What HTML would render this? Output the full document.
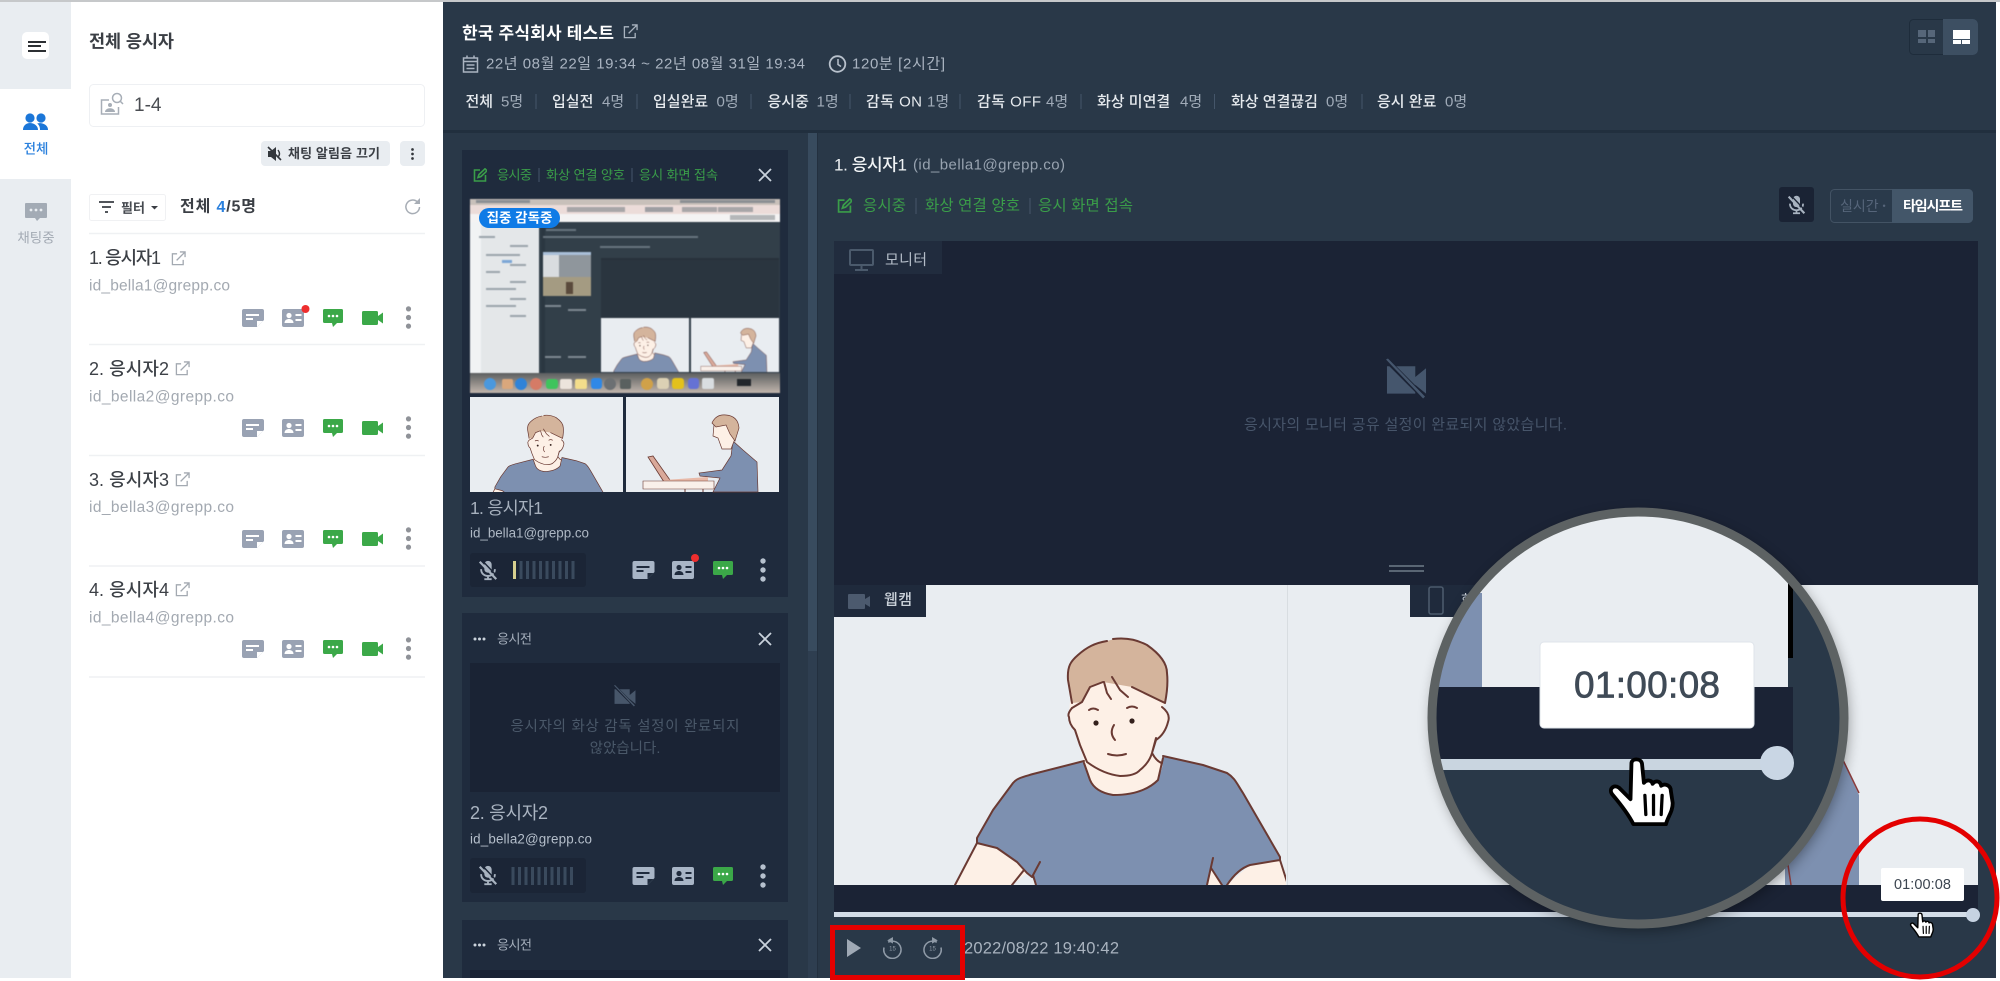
<!DOCTYPE html>
<html lang="ko"><head><meta charset="utf-8"><title>전체 응시자</title>
<style>
html,body{margin:0;padding:0;background:#fff;width:2000px;height:981px;overflow:hidden}
svg{display:block;position:absolute;left:0;top:0}
text{font-family:"Liberation Sans","Noto Sans CJK KR",sans-serif;dominant-baseline:central;white-space:pre}
.b{font-weight:700}.m{font-weight:500}
.g{fill:#3a9d49}
.s{fill:#aab4c1}
</style></head><body>
<svg width="2000" height="981" viewBox="0 0 2000 981" xmlns="http://www.w3.org/2000/svg">
<defs>
<symbol id="memo" viewBox="0 0 22 18"><path fill="currentColor" d="M2 0h18a2 2 0 0 1 2 2v9l-7 7H2a2 2 0 0 1-2-2V2a2 2 0 0 1 2-2z"/><rect x="4" y="5" width="13" height="2" fill="var(--k,#fff)"/><rect x="4" y="9" width="7" height="2" fill="var(--k,#fff)"/><path d="M15 12h6l-6 6z" fill="var(--k,#fff)"/></symbol>
<symbol id="idc" viewBox="0 0 22 18"><rect width="22" height="18" rx="2" fill="currentColor"/><circle cx="7" cy="6.5" r="2.6" fill="var(--k,#fff)"/><path d="M2.500 14c0-3 2.500-4 4.500-4s4.500 1 4.500 4z" fill="var(--k,#fff)"/><rect x="13.500" y="5" width="6" height="2" fill="var(--k,#fff)"/><rect x="13.500" y="10" width="6" height="2" fill="var(--k,#fff)"/></symbol>
<symbol id="chat" viewBox="0 0 20 18"><path fill="#3ba848" d="M1.500 0h17A1.500 1.500 0 0 1 20 1.500v11a1.500 1.500 0 0 1-1.500 1.500H14l-4 4-1-4H1.500A1.500 1.500 0 0 1 0 12.500v-11A1.500 1.500 0 0 1 1.500 0z"/><circle cx="6" cy="7" r="1.300" fill="#fff"/><circle cx="10" cy="7" r="1.300" fill="#fff"/><circle cx="14" cy="7" r="1.300" fill="#fff"/></symbol>
<symbol id="video" viewBox="0 0 21 14"><path fill="#3ba848" d="M1.500 0h13A1.500 1.500 0 0 1 16 1.500V5l5-3.500v11L16 9v3.500a1.500 1.500 0 0 1-1.500 1.500h-13A1.500 1.500 0 0 1 0 12.500v-11A1.500 1.500 0 0 1 1.500 0z"/></symbol>
<symbol id="dots" viewBox="0 0 6 24"><circle cx="3" cy="3" r="2.700" fill="currentColor"/><circle cx="3" cy="12" r="2.700" fill="currentColor"/><circle cx="3" cy="21" r="2.700" fill="currentColor"/></symbol>
<symbol id="micoff" viewBox="0 0 24 24"><g fill="none" stroke="currentColor" stroke-width="2"><rect x="8" y="2" width="8" height="13" rx="4" fill="currentColor" stroke="none"/><path d="M4.500 11c0 5 3.500 7.500 7.500 7.500s7.500-2.500 7.500-7.500M12 18.500V22M8 22h8"/><path d="M3 3l18 19" stroke-width="2.400"/><path d="M5.500 1.500l18 19" stroke="var(--k,#1b2536)" stroke-width="1.600"/></g></symbol>
<symbol id="camoff" viewBox="0 0 42 42"><path fill="currentColor" d="M1 8h29v11l11-9v26l-11-9v9H1z"/><path d="M1 2l38 38" stroke="var(--k,#1a2334)" stroke-width="5"/><path d="M0 1l2-1 38 39-2 2z" fill="currentColor"/></symbol>
<symbol id="ext" viewBox="0 0 16 16"><path fill="none" stroke="currentColor" stroke-width="1.400" d="M6.500 3H1.500v11.500H13V9.500M6 10L14.500 1.500M9.500 1H15v5.500"/></symbol>
<symbol id="edit" viewBox="0 0 14 14"><path fill="none" stroke="#3a9d49" stroke-width="1.600" d="M7 2H1.500v11h11V7M5 9.500l1-3L12 .800l2 2L8 8.500z"/></symbol>
<symbol id="hand" viewBox="-3 -3 72 74"><path fill="#fff" stroke="#000" stroke-width="4" stroke-linejoin="round" d="M22 5C22-1 32-1 33 5L35 25C38 21 43 22 44 26C47 22 52 23 53 28C57 25 63 28 63 33L65 46C65 55 60 60 58 68L24 68C20 60 13 50 2 37C-2 32 3 26 9 30L21 42Z"/><path stroke="#000" stroke-width="3.400" stroke-linecap="round" d="M36 38L37 58M45 38L45 58M54 38L53 58"/></symbol>
<symbol id="back" viewBox="0 0 24 24"><g fill="none" stroke="currentColor" stroke-width="1.600"><path d="M7.500 6.500A9 9 0 1 1 3.200 12"/></g><path d="M12.500 1v7L6.500 4.500z" fill="currentColor"/></symbol>
<symbol id="fwd" viewBox="0 0 24 24"><g fill="none" stroke="currentColor" stroke-width="1.600"><path d="M16.500 6.500A9 9 0 1 0 20.800 12"/></g><path d="M11.500 1v7l6-3.500z" fill="currentColor"/></symbol>

<g id="front">
  <path fill="#fdf0e6" d="M-164 247L-142 205L-122 210L-102 224L-92 235L-107 247zM108 247L131 227L161 222L169 247zM92 230L103 247H88z"/>
  <path fill="#7d90b0" d="M-35 123L-86 136C-96 139-102 140-106 145L-126 172L-142 200L-142 205L-122 210L-102 224L-92 235L-87 239L-83 247L88 247L92 230L103 247L108 247C114 238 122 230 131 227L161 222L161 219L124 155C118 146 116 140 108 135L84 127L44 118Q46 155 -6 157Q-26 150-35 123z"/>
  <path fill="#fdf0e6" d="M-47 40L46 40L46 66L43 69Q52 76 49 84Q46 96 37 100L33 115L44 124L39 142Q24 157 -6 157Q-24 154-29 142L-35 124L-39 107L-44 92Q-52 84-50 76Z"/>
  <path fill="#d4b49c" d="M-47 65L-51 42C-52 28-48 23-41 17C-32 9-24 5-12 3L-1 0C10 0 20 3 28 7C38 14 48 24 48 35C49 44 48 55 46 65L13 49L-16 44L-29 49L-37 64Z"/>
  <g fill="none" stroke="#6a3a33" stroke-width="2" stroke-linecap="round" stroke-linejoin="round">
    <path d="M-47 65L-51 42C-52 28-48 23-41 17C-32 9-24 5-12 3M-6 1C10-1 20 3 28 7C38 14 48 24 48 35C49 44 48 55 46 65M46 65L13 49M-16 44L-29 49L-37 64L-47 70M-15 44L-12 55L-8 61M-7 39L1 52L9 59"/>
    <path d="M-47 70Q-52 76-50 79Q-50 86-44 92L-39 107L-32 124Q-16 136 1 138Q16 138 21 132Q30 125 33 115L37 100M43 69Q52 76 49 84Q46 96 37 102L33 115Q38 124 43 125"/>
    <path d="M-35 125L-29 142Q-24 154-6 157Q24 157 39 142L44 120"/>
    <path d="M-35 123L-86 136C-96 139-102 140-106 145L-126 172L-142 200L-142 205L-122 210L-102 224L-92 235L-87 239L-79 224M-86 237L-83 247M-142 205L-164 247M-95 232L-107 247"/>
    <path d="M44 118L84 127L108 135C116 140 118 146 124 155L161 219L161 222L131 227C122 230 114 238 108 247M161 222L169 247M94 220L88 247M92 230L103 247"/>
    <path d="M-30 72Q-26 69-21 72M8 70Q13 67 18 70M-5 87Q-10 95-4 102M-11 116Q-2 119 7 116"/>
  </g>
  <circle cx="-23" cy="85" r="2.600" fill="#33201c"/><circle cx="13" cy="83" r="2.600" fill="#33201c"/>
</g>
<g id="side">
  <rect x="626" y="397" width="153" height="95" fill="#e9edf1"/>
  <path fill="#7d90b0" stroke="#6a3a33" stroke-width=".7" d="M733 441L743 450L757 462L758 492L713 492L720 478L700 476L699 473L722 470L731 456z"/>
  <path fill="#fdf0e6" stroke="#6a3a33" stroke-width=".7" d="M714 425L713 436L718 438L722 449L731 449L736 436L733 418z"/>
  <path fill="#d4b49c" stroke="#6a3a33" stroke-width=".7" d="M712 423Q716 414 726 415Q738 416 739 428L735 441L730 434L726 425L716 427z"/>
  <path fill="#d9a99a" stroke="#6a3a33" stroke-width=".8" d="M648 457L653 456L670 480L664 482z"/>
  <path fill="#e8b9a8" d="M664 480L708 477L708 482L664 482z"/>
  <path fill="#f9f0ea" stroke="#6a3a33" stroke-width=".6" d="M643 481h71v8h-71z"/>
  <path stroke="#6a3a33" stroke-width="1" d="M685 489v3M703 489v3"/>
</g>
<clipPath id="clip-mag"><circle cx="1638" cy="718" r="207"/></clipPath>
<clipPath id="clip-t1"><rect x="470" y="397" width="153" height="95"/></clipPath>
<clipPath id="clip-m1"><rect x="601" y="318" width="88" height="54"/></clipPath>
<clipPath id="clip-m2"><rect x="691" y="318" width="88" height="54"/></clipPath>
<clipPath id="clip-w"><rect x="834" y="585" width="452" height="300"/></clipPath>
<linearGradient id="dock" x1="0" x2="0" y1="0" y2="1"><stop offset="0" stop-color="#5c5f60"/><stop offset="1" stop-color="#c2b6ad"/></linearGradient>
</defs>

<!-- base -->
<rect width="2000" height="981" fill="#fff"/>
<rect x="0" y="0" width="71" height="978" fill="#e9edf1"/>
<rect x="0" y="89" width="71" height="90" fill="#fff"/>
<rect x="71" y="0" width="372" height="978" fill="#fff"/>
<rect x="443" y="0" width="1553" height="978" fill="#293848"/>
<rect x="0" y="0" width="2000" height="2" fill="#c6c8ca"/>

<!-- nav -->
<rect x="22" y="32" width="27" height="27" rx="5" fill="#fff"/>
<path fill="#2c2f33" d="M28 41h18v2H28zM28 45h13v2H28zM28 50h18v2H28z"/>
<g fill="#1b76d8"><circle cx="30" cy="118" r="4.600"/><circle cx="41" cy="118" r="4.600"/><path d="M23 130c0-5 4-7 7-7s8 2 8 7zM40 130c0-3-.8-5-2.800-6.500 3-1 10.800 0 10.800 6.500z"/></g>
<text x="36" y="149" text-anchor="middle" font-size="13.500" fill="#2a80dd" class="m">전체</text>
<path fill="#a3abb5" d="M26 203h20a1 1 0 0 1 1 1v13a1 1 0 0 1-1 1h-6l-3 3-2-3H26a1 1 0 0 1-1-1v-13a1 1 0 0 1 1-1z"/>
<g fill="#e9edf1"><circle cx="31" cy="210" r="1.400"/><circle cx="36" cy="210" r="1.400"/><circle cx="41" cy="210" r="1.400"/></g>
<text x="36" y="238" text-anchor="middle" font-size="13.500" fill="#a3aab4">채팅중</text>

<!-- panel -->
<text x="89" y="41.500" font-size="17.500" class="b" fill="#3b3f45" textLength="85">전체 응시자</text>
<rect x="89.500" y="84.500" width="335" height="42" rx="4" fill="#fff" stroke="#eef0f3"/>
<g fill="none" stroke="#a7aeb7" stroke-width="1.500"><path d="M109 100h-7.500v14h17v-7"/><circle cx="117" cy="98" r="4.500"/><path d="M120 101l3 3"/></g>
<circle cx="110" cy="105" r="2" fill="#a7aeb7"/><path d="M105 112c0-5 10-5 10 0z" fill="#a7aeb7"/>
<text x="134" y="105.500" font-size="19" fill="#4a4d52">1-4</text>
<rect x="261" y="141" width="129" height="25" rx="4" fill="#e9edf1"/>
<path fill="#33373c" d="M268 151h3l5-4v14l-5-4h-3z"/><path stroke="#33373c" stroke-width="1.600" d="M268 147l13 13" fill="none"/><path stroke="#33373c" stroke-width="1.400" fill="none" d="M278 150q3 4 0 7"/>
<text x="288" y="153.500" font-size="13" class="b" fill="#3a3e44" textLength="92">채팅 알림음 끄기</text>
<rect x="400" y="141" width="25" height="25" rx="4" fill="#e9edf1"/>
<use href="#dots" x="410" y="148" width="5" height="12" color="#33373c"/>
<rect x="89.500" y="194.500" width="76" height="26" rx="2" fill="#fff" stroke="#f0f1f3"/>
<path stroke="#3a3e44" stroke-width="1.700" d="M99 202h15M102 207h9M105 212h3"/>
<text x="121" y="208" font-size="13" class="b" fill="#45494f">필터</text>
<path fill="#3a3e44" d="M151 206h7l-3.500 3.500z"/>
<text x="180" y="207" font-size="16" class="b" fill="#3b3f45" textLength="76">전체 <tspan fill="#2a80dd">4</tspan>/5명</text>
<path fill="none" stroke="#a7adb5" stroke-width="1.500" d="M417.500 202a6.800 6.800 0 1 0 2 5"/><path fill="#a7adb5" d="M420 198v6h-6z"/>
<g stroke="#eff1f3" stroke-width="1.500"><path d="M89 233.500h336M89 344.500h336M89 455.500h336M89 566h336M89 677h336"/></g>

<text x="89" y="258" font-size="18" class="m" fill="#3d4147" textLength="72">1. 응시자1</text>
<use href="#ext" x="171" y="251" width="15" height="15" color="#a3a9b1"/>
<text x="89" y="286" font-size="15.500" fill="#a3a9b1" textLength="141">id_bella1@grepp.co</text>
<use href="#memo" x="242" y="309" width="22" height="18" color="#99a2b3"/>
<use href="#idc" x="282" y="309" width="22" height="18" color="#99a2b3"/>
<circle cx="305.500" cy="309" r="4" fill="#ee2e2e"/>
<use href="#chat" x="323" y="309" width="20" height="18"/>
<use href="#video" x="362" y="311" width="21" height="14"/>
<use href="#dots" x="405.500" y="306" width="6" height="23" color="#8f9298"/>
<text x="89" y="369" font-size="18" class="m" fill="#3d4147" textLength="80">2. 응시자2</text>
<use href="#ext" x="175" y="361" width="15" height="15" color="#a3a9b1"/>
<text x="89" y="397" font-size="15.500" fill="#a3a9b1" textLength="145">id_bella2@grepp.co</text>
<use href="#memo" x="242" y="419" width="22" height="18" color="#99a2b3"/>
<use href="#idc" x="282" y="419" width="22" height="18" color="#99a2b3"/>
<use href="#chat" x="323" y="419" width="20" height="18"/>
<use href="#video" x="362" y="421" width="21" height="14"/>
<use href="#dots" x="405.500" y="416" width="6" height="23" color="#8f9298"/>
<text x="89" y="480" font-size="18" class="m" fill="#3d4147" textLength="80">3. 응시자3</text>
<use href="#ext" x="175" y="472" width="15" height="15" color="#a3a9b1"/>
<text x="89" y="507.500" font-size="15.500" fill="#a3a9b1" textLength="145">id_bella3@grepp.co</text>
<use href="#memo" x="242" y="530" width="22" height="18" color="#99a2b3"/>
<use href="#idc" x="282" y="530" width="22" height="18" color="#99a2b3"/>
<use href="#chat" x="323" y="530" width="20" height="18"/>
<use href="#video" x="362" y="532" width="21" height="14"/>
<use href="#dots" x="405.500" y="527" width="6" height="23" color="#8f9298"/>
<text x="89" y="590" font-size="18" class="m" fill="#3d4147" textLength="80">4. 응시자4</text>
<use href="#ext" x="175" y="582" width="15" height="15" color="#a3a9b1"/>
<text x="89" y="618" font-size="15.500" fill="#a3a9b1" textLength="145">id_bella4@grepp.co</text>
<use href="#memo" x="242" y="640" width="22" height="18" color="#99a2b3"/>
<use href="#idc" x="282" y="640" width="22" height="18" color="#99a2b3"/>
<use href="#chat" x="323" y="640" width="20" height="18"/>
<use href="#video" x="362" y="642" width="21" height="14"/>
<use href="#dots" x="405.500" y="637" width="6" height="23" color="#8f9298"/>

<!-- header -->
<text x="462" y="33.500" font-size="17" class="b" fill="#fff" textLength="152">한국 주식회사 테스트</text>
<use href="#ext" x="623" y="24" width="15" height="15" color="#a9b3bf"/>
<g fill="none" stroke="#aab4c1" stroke-width="1.500"><rect x="463.500" y="58" width="14" height="14"/><path d="M463.500 61.500h14M467 55.500v3M474 55.500v3M466.500 65h8M466.500 68.500h8"/></g>
<text x="486" y="64" font-size="15" class="s" textLength="319">22년 08월 22일 19:34 ~ 22년 08월 31일 19:34</text>
<circle cx="837.500" cy="64" r="7.800" fill="none" stroke="#b8c1cc" stroke-width="1.800"/><path fill="none" stroke="#b8c1cc" stroke-width="1.500" d="M838 59v5.500l3 2"/>
<text x="852" y="64" font-size="15" class="s" textLength="93">120분 [2시간]</text>
<g font-size="15">
<text x="465.500" y="102" class="m" fill="#e6eaee">전체</text><text x="501" y="102" fill="#a0abb8">5명</text>
<text x="552" y="102" class="m" fill="#e6eaee">입실전</text><text x="602" y="102" fill="#a0abb8">4명</text>
<text x="653" y="102" class="m" fill="#e6eaee">입실완료</text><text x="716.500" y="102" fill="#a0abb8">0명</text>
<text x="767.500" y="102" class="m" fill="#e6eaee">응시중</text><text x="816.500" y="102" fill="#a0abb8">1명</text>
<text x="866" y="102" class="m" fill="#e6eaee" textLength="56">감독 ON</text><text x="927" y="102" fill="#a0abb8">1명</text>
<text x="977" y="102" class="m" fill="#e6eaee" textLength="64">감독 OFF</text><text x="1046" y="102" fill="#a0abb8">4명</text>
<text x="1097" y="102" class="m" fill="#e6eaee">화상 미연결</text><text x="1180" y="102" fill="#a0abb8">4명</text>
<text x="1231" y="102" class="m" fill="#e6eaee">화상 연결끊김</text><text x="1326" y="102" fill="#a0abb8">0명</text>
<text x="1377" y="102" class="m" fill="#e6eaee">응시 완료</text><text x="1445" y="102" fill="#a0abb8">0명</text>
</g>
<g stroke="#45566a" stroke-width="1"><path d="M536 94v15M637 94v15M751 94v15M850 94v15M960 94v15M1081 94v15M1214.500 94v15M1362 94v15"/></g>
<rect x="1909.500" y="19.500" width="68" height="35" rx="4" fill="#293848" stroke="#1e2c3b"/>
<path d="M1943 19h30a5 5 0 0 1 5 5v26a5 5 0 0 1-5 5h-30z" fill="#3d4f62"/>
<g fill="#566679"><rect x="1918" y="30" width="8" height="7"/><rect x="1928" y="30" width="7" height="7"/><rect x="1918" y="39" width="8" height="4"/><rect x="1928" y="39" width="7" height="4"/></g>
<g fill="#fff"><rect x="1953" y="30" width="17" height="9"/><rect x="1953" y="40" width="8" height="4"/><rect x="1962" y="40" width="8" height="4"/></g>
<rect x="443" y="130" width="1553" height="3" fill="#212f3e"/>

<!-- left column -->
<rect x="808" y="133" width="9" height="845" fill="#2e3e50"/>
<rect x="808" y="133" width="9" height="518" fill="#384b5e"/>
<rect x="817" y="133" width="1" height="845" fill="#23303f"/>
<rect x="462" y="150" width="326" height="447" fill="#1f2b3d"/>
<use href="#edit" x="473" y="168" width="14" height="14"/>
<g font-size="13.200" class="g">
<text x="497" y="175" class="g" textLength="35">응시중</text>
<text x="546" y="175" class="g" textLength="79">화상 연결 양호</text>
<text x="639" y="175" class="g" textLength="79">응시 화면 접속</text></g>
<path stroke="#46566a" d="M539 168v14M632 168v14"/>
<path stroke="#c9d2dc" stroke-width="1.800" d="M759 169l12 12M771 169l-12 12"/>

<!-- screen thumb -->
<g style="filter:blur(.5px)">
<rect x="470" y="199" width="310" height="194" fill="#34414c"/>
<rect x="470" y="199" width="310" height="6" fill="#c8c0ba"/>
<rect x="470" y="205" width="310" height="10" fill="#ecdcd9"/>
<rect x="470" y="214" width="310" height="9" fill="#f4f3f3"/>
<rect x="470" y="222" width="69" height="152" fill="#e4e7e9"/>
<rect x="470" y="222" width="11" height="152" fill="#f1f3f4"/>
<rect x="539" y="222" width="241" height="152" fill="#323f49"/>
<g fill="#8b8f93"><rect x="476" y="200" width="40" height="3"/><rect x="500" y="200" width="30" height="3"/><rect x="680" y="200" width="95" height="3"/><rect x="567" y="207" width="58" height="5" opacity=".7"/><rect x="645" y="207" width="28" height="5" opacity=".8"/><rect x="682" y="207" width="35" height="5" opacity=".7"/><rect x="718" y="207" width="35" height="5" opacity=".7"/><rect x="730" y="215" width="45" height="5" opacity=".6"/></g>
<rect x="541" y="222" width="4" height="152" fill="#2b3741"/>
<g fill="#68747e"><rect x="543" y="236" width="155" height="2"/><rect x="600" y="246" width="50" height="2"/><rect x="546" y="229" width="30" height="2"/></g>
<rect x="543" y="252" width="48" height="25" fill="#8f969c"/>
<rect x="543" y="252" width="16" height="25" fill="#d9dcdf"/>
<rect x="543" y="252" width="48" height="3" fill="#a9bfd8"/>
<rect x="543" y="277" width="48" height="19" fill="#a49b82"/>
<rect x="566" y="282" width="7" height="12" fill="#5a4a3c"/>
<rect x="601" y="258" width="178" height="2" fill="#27323b"/>
<rect x="601" y="260" width="178" height="58" fill="#2a353f"/>
<g fill="#9aa3ab"><rect x="479" y="236" width="16" height="2"/><rect x="510" y="245" width="18" height="2"/><rect x="486" y="254" width="34" height="2"/><rect x="486" y="271" width="14" height="2"/><rect x="486" y="288" width="30" height="2"/><rect x="486" y="305" width="30" height="2"/><rect x="510" y="264" width="16" height="2"/><rect x="510" y="281" width="16" height="2"/><rect x="510" y="298" width="16" height="2"/><rect x="510" y="315" width="16" height="2"/></g>
<rect x="502" y="260" width="10" height="3" fill="#7da7d6"/>
<g fill="#7e8891"><rect x="545" y="305" width="16" height="2"/><rect x="568" y="309" width="18" height="2"/><rect x="545" y="356" width="16" height="2"/><rect x="568" y="356" width="18" height="2"/></g>
<rect x="601" y="318" width="88" height="54" fill="#e9edf1"/><rect x="691" y="318" width="88" height="54" fill="#e9edf1"/>
<g clip-path="url(#clip-m1)"><use href="#front" transform="translate(645 327) scale(.22)"/></g>
<g clip-path="url(#clip-m2)"><use href="#side" transform="translate(691 318) scale(.575) translate(-626 -397)"/></g>
<rect x="470" y="373" width="310" height="20" fill="url(#dock)"/>
<g><circle cx="490" cy="384" r="6" fill="#4a98dd"/><rect x="502" y="379" width="11" height="10" rx="2" fill="#d9a77c"/><circle cx="521" cy="384" r="6" fill="#2f83d8"/><circle cx="536" cy="384" r="6" fill="#d57b66"/><rect x="546" y="379" width="12" height="10" rx="3" fill="#3fc45d"/><rect x="560" y="379" width="12" height="10" rx="2" fill="#ece4dc"/><rect x="575" y="379" width="12" height="10" rx="2" fill="#f3dd8b"/><rect x="591" y="378" width="11" height="11" rx="3" fill="#2f88e6"/><circle cx="610" cy="384" r="6" fill="#6c7073"/><rect x="620" y="379" width="11" height="10" rx="2" fill="#59605f"/><circle cx="647" cy="384" r="6" fill="#d0a149"/><rect x="657" y="378" width="12" height="11" rx="3" fill="#dcd1b4"/><rect x="672" y="378" width="12" height="11" rx="3" fill="#e3c11c"/><rect x="688" y="378" width="11" height="11" rx="3" fill="#6572d4"/><rect x="702" y="378" width="12" height="11" rx="2" fill="#d9dde0"/><rect x="737" y="379" width="14" height="7" fill="#22262b"/></g>
</g>
<rect x="479" y="208" width="81" height="20" rx="10" fill="#0f7be6"/>
<text x="519.500" y="218" text-anchor="middle" font-size="13.500" class="b" fill="#fff">집중 감독중</text>

<!-- thumbs -->
<rect x="470" y="397" width="153" height="95" fill="#e9edf1"/>
<g clip-path="url(#clip-t1)"><use href="#front" transform="translate(546 415) scale(.36)"/></g>
<use href="#side"/>
<text x="470" y="508" font-size="17.500" fill="#a6b0bd" textLength="73">1. 응시자1</text>
<text x="470" y="533" font-size="13.400" fill="#aeb8c4" textLength="119">id_bella1@grepp.co</text>
<rect x="470" y="553" width="116" height="34" rx="3" fill="#1b2536"/>
<use href="#micoff" x="477" y="559" width="22" height="22" color="#a8b3c0"/>
<rect x="513" y="561" width="3" height="18" fill="#d6cf8f"/>
<path stroke="#3a4a5d" stroke-width="3" d="M521 561v18M527.500 561v18M534 561v18M540.500 561v18M547 561v18M553.500 561v18M560 561v18M566.500 561v18M573 561v18"/>
<g style="--k:#1f2b3d">
<use href="#memo" x="632" y="561" width="23" height="18" color="#a8b5c6"/>
<use href="#idc" x="672" y="561" width="22" height="18" color="#a8b5c6"/>
<circle cx="695" cy="558" r="4" fill="#ee2e2e"/>
<use href="#chat" x="713" y="561" width="20" height="18"/>
<use href="#dots" x="760" y="558" width="6" height="24" color="#b6c1ce"/>
</g>

<rect x="462" y="613" width="326" height="289" fill="#1f2b3d"/>
<g fill="#cbd3dc"><circle cx="475" cy="639" r="1.500"/><circle cx="479.500" cy="639" r="1.500"/><circle cx="484" cy="639" r="1.500"/></g>
<text x="497" y="639" font-size="13.200" fill="#a4aebb" textLength="35">응시전</text>
<path stroke="#c9d2dc" stroke-width="1.800" d="M759 633l12 12M771 633l-12 12"/>
<rect x="470" y="663" width="310" height="129" fill="#1a2334"/>
<use href="#camoff" x="614" y="685" width="22" height="22" color="#47566a"/>
<text x="625" y="727" text-anchor="middle" font-size="14.500" fill="#4a5869" textLength="229">응시자의 화상 감독 설정이 완료되지</text>
<text x="625" y="749" text-anchor="middle" font-size="14.500" fill="#4a5869">않았습니다.</text>
<text x="470" y="813" font-size="18" fill="#aab4c1" textLength="78">2. 응시자2</text>
<text x="470" y="839" font-size="13.400" fill="#b5bfcb" textLength="122">id_bella2@grepp.co</text>
<rect x="470" y="858" width="116" height="35" rx="3" fill="#1b2536"/>
<use href="#micoff" x="477" y="864" width="22" height="22" color="#a8b3c0"/>
<path stroke="#3a4a5d" stroke-width="3" d="M513 867v18M519.500 867v18M526 867v18M532.500 867v18M539 867v18M545.500 867v18M552 867v18M558.500 867v18M565 867v18M571.500 867v18"/>
<g style="--k:#1f2b3d">
<use href="#memo" x="632" y="867" width="23" height="18" color="#a8b5c6"/>
<use href="#idc" x="672" y="867" width="22" height="18" color="#a8b5c6"/>
<use href="#chat" x="713" y="867" width="20" height="18"/>
<use href="#dots" x="760" y="864" width="6" height="24" color="#b6c1ce"/>
</g>

<rect x="462" y="920" width="326" height="58" fill="#1f2b3d"/>
<g fill="#cbd3dc"><circle cx="475" cy="945" r="1.500"/><circle cx="479.500" cy="945" r="1.500"/><circle cx="484" cy="945" r="1.500"/></g>
<text x="497" y="945" font-size="13.200" fill="#a4aebb" textLength="35">응시전</text>
<path stroke="#c9d2dc" stroke-width="1.800" d="M759 939l12 12M771 939l-12 12"/>
<rect x="470" y="970" width="310" height="8" fill="#1a2334"/>

<!-- main -->
<text x="834" y="165" font-size="17" class="m" fill="#f0f3f5" textLength="73">1. 응시자1</text>
<text x="913" y="165" font-size="15" fill="#98a3b0" textLength="152">(id_bella1@grepp.co)</text>
<use href="#edit" x="837" y="198" width="15" height="15"/>
<text x="863" y="206" font-size="15.500" class="g" textLength="43">응시중</text>
<text x="925" y="206" font-size="15.500" class="g" textLength="95">화상 연결 양호</text>
<text x="1038" y="206" font-size="15.500" class="g" textLength="95">응시 화면 접속</text>
<path stroke="#46566a" d="M916 198v16M1030 198v16"/>
<rect x="1779" y="187" width="35" height="35" rx="3" fill="#1a2334"/>
<use href="#micoff" x="1786" y="194" width="21" height="21" color="#a8b3c0" style="--k:#1a2334"/>
<rect x="1830.500" y="189.500" width="142" height="33" rx="4" fill="#2a3a4b" stroke="#435364"/>
<path d="M1892 189h76a5 5 0 0 1 5 5v24a5 5 0 0 1-5 5h-76z" fill="#435669"/>
<text x="1840" y="206" font-size="14" fill="#56657a">실시간 <tspan font-size="9">•</tspan></text>
<text x="1903" y="206" font-size="14" class="b" fill="#fff" textLength="60">타임시프트</text>

<rect x="834" y="241" width="1144" height="344" fill="#1b2335"/>
<rect x="834" y="241" width="108" height="33" fill="#212c3e"/>
<g fill="none" stroke="#4b5a6c" stroke-width="2"><rect x="850" y="250" width="23" height="15" rx="1"/></g><path stroke="#4b5a6c" stroke-width="2" d="M861.500 265v4M855 270h13"/>
<text x="885" y="260" font-size="15" fill="#b4bdc8" textLength="42">모니터</text>
<use href="#camoff" x="1386" y="358" width="41" height="42" color="#45566d" style="--k:#1b2335"/>
<text x="1405.500" y="425" text-anchor="middle" font-size="15" fill="#47556a" textLength="323">응시자의 모니터 공유 설정이 완료되지 않았습니다.</text>
<path stroke="#6f7c8a" stroke-width="1.500" d="M1389 566h35M1389 571h35"/>

<!-- videos -->
<rect x="834" y="585" width="1144" height="300" fill="#e9edf1"/>
<rect x="1287" y="585" width="1" height="300" fill="#d8dde1"/>
<g clip-path="url(#clip-w)"><use href="#front" transform="translate(1119 638)"/></g>
<rect x="834" y="585" width="92" height="32" fill="#1f2a3c"/>
<path fill="#4c5a6e" d="M849 594h15a1 1 0 0 1 1 1v4l5-3v11l-5-3v4a1 1 0 0 1-1 1h-15a1 1 0 0 1-1-1v-13a1 1 0 0 1 1-1z"/>
<text x="884" y="600" font-size="15" class="m" fill="#cbd2da" textLength="28">웹캠</text>
<rect x="1410" y="585" width="80" height="32" fill="#1f2a3c"/>
<rect x="1429" y="587" width="14" height="27" rx="2" fill="none" stroke="#4b5a6c" stroke-width="1.600"/>
<text x="1461" y="600" font-size="14" fill="#cbd2da">화면</text>
<path fill="#7d90b0" d="M1838 750L1859 795V885H1785V800z"/>
<path fill="none" stroke="#8a3b3b" stroke-width="1.500" d="M1843 760L1859 793M1788 865L1791 885"/>
<rect x="834" y="885" width="1144" height="27" fill="#1b2335"/>
<rect x="834" y="912" width="1139" height="5" fill="#d3dde8"/>
<circle cx="1973" cy="915" r="7" fill="#c6d3e2"/>

<!-- controls -->
<path fill="#9fa9b5" d="M847 939l14 9-14 9z"/>
<use href="#back" x="881" y="936" width="23" height="23" color="#8f9aa7"/>
<use href="#fwd" x="921" y="936" width="23" height="23" color="#8f9aa7"/>
<text x="892.500" y="949.500" text-anchor="middle" font-size="6" fill="#8f9aa7">15</text>
<text x="932.500" y="949.500" text-anchor="middle" font-size="6" fill="#8f9aa7">15</text>
<text x="964" y="948.500" font-size="16.500" fill="#a9b3bf" textLength="155">2022/08/22 19:40:42</text>
<rect x="832.500" y="927.500" width="130" height="50" fill="none" stroke="#e40000" stroke-width="5"/>

<!-- small tooltip -->
<rect x="1881" y="868" width="83" height="33" rx="2" fill="#fff"/>
<text x="1922.500" y="885" text-anchor="middle" font-size="14.500" fill="#3c4550" textLength="57">01:00:08</text>
<use href="#hand" x="1909" y="912" width="26" height="26"/>
<ellipse cx="1920" cy="898" rx="77" ry="79" fill="none" stroke="#e30000" stroke-width="5"/>

<!-- magnifier -->
<circle cx="1640" cy="722" r="208" fill="#000" opacity=".4" style="filter:blur(7px)"/>
<g clip-path="url(#clip-mag)">
  <rect x="1420" y="500" width="440" height="440" fill="#293848"/>
  <rect x="1420" y="593" width="62" height="94" fill="#7d90b0"/>
  <rect x="1482" y="500" width="306" height="187" fill="#e9edf1"/>
  <rect x="1420" y="500" width="62" height="93" fill="#e9edf1"/>
  <rect x="1788" y="500" width="5" height="158" fill="#000"/>
  <rect x="1420" y="687" width="373" height="72" fill="#1b2335"/>
  <rect x="1420" y="759" width="357" height="11" fill="#c9d5e0"/>
  <circle cx="1777" cy="763" r="17" fill="#c9d6e4"/>
</g>
<circle cx="1638" cy="718" r="206" fill="none" stroke="#5d6263" stroke-width="9"/>
<rect x="1540" y="642" width="214" height="86" rx="4" fill="#fff" stroke="#dfe4ea"/>
<text x="1647" y="685" text-anchor="middle" font-size="37" fill="#3f4a56" stroke="#3f4a56" stroke-width=".7" textLength="146">01:00:08</text>
<use href="#hand" x="1607" y="756" width="70" height="71"/>
</svg>
</body></html>
